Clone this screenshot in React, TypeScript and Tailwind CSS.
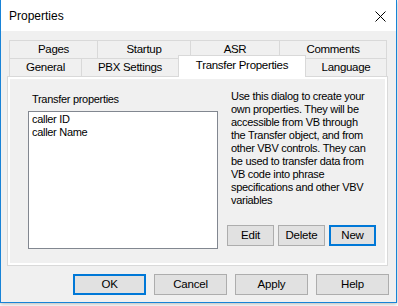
import { ReactNode } from 'react';

const font = { fontFamily: '"Liberation Sans", Arial, sans-serif' };

const topTabs = [
    { label: 'Pages', w: 'w-[88px]' },
    { label: 'Startup', w: 'w-[93px]' },
    { label: 'ASR', w: 'w-[89px]' },
    { label: 'Comments', w: 'w-[108px] border-r' },
];

const descLines = [
    'Use this dialog to create your',
    'own properties. They will be',
    'accessible from VB through',
    'the Transfer object, and from',
    'other VBV controls. They can',
    'be used to transfer data from',
    'VB code into phrase',
    'specifications and other VBV',
    'variables',
];

function Btn({ children, w, primary }: { children: ReactNode; w: string; primary?: boolean }) {
    return (
        <button
            className={`${w} h-[21px] flex items-center justify-center bg-[#e1e1e1] text-[11.5px] tracking-[-0.2px] text-black ${primary ? 'border-2 border-[#0078d7]' : 'border border-[#adadad]'
                }`}
        >
            {children}
        </button>
    );
}

export default function App() {
    return (
        <div className="w-[398px] h-[306px] bg-white" style={font}>
            <div className="w-[397px] h-[303px] flex flex-col bg-[#f0f0f0] border-x border-b border-[#1883d7] shadow-[0_1px_4px_rgba(0,0,0,0.3)]">
                {/* title bar */}
                <div className="h-[31px] bg-white flex items-center pl-[8px] pr-[10px] justify-between">
                    <span className="text-[12px] text-black">Properties</span>
                    <svg width="11" height="11" viewBox="0 0 11 11" className="mt-[1px]">
                        <path d="M0.5 0.5 L10.5 10.5 M10.5 0.5 L0.5 10.5" stroke="#000" strokeWidth="1" />
                    </svg>
                </div>

                <div className="pl-[6px] pt-[9px] flex flex-col">
                    {/* tab rows */}
                    <div className="ml-[2px] flex h-[18px]">
                        {topTabs.map((t) => (
                            <div
                                key={t.label}
                                className={`${t.w} h-full border-l border-t border-[#d9d9d9] flex items-center justify-center text-[11.5px] tracking-[-0.3px] text-black`}
                            >
                                {t.label}
                            </div>
                        ))}
                    </div>
                    <div className="ml-[2px] flex items-end h-[18px]">
                        <div className="w-[72px] h-full border-l border-t border-[#d9d9d9] flex items-center justify-center text-[11.5px] tracking-[-0.3px] text-black">
                            General
                        </div>
                        <div className="w-[97px] h-full border-l border-t border-[#d9d9d9] flex items-center justify-center text-[11.5px] tracking-[-0.3px] text-black">
                            PBX Settings
                        </div>
                        <div className="relative z-10 w-[128px] h-[22px] -mb-[1px] bg-white border-x border-t border-[#d9d9d9] flex items-center justify-center pb-[1px] text-[11.5px] tracking-[-0.3px] text-black">
                            Transfer Properties
                        </div>
                        <div className="w-[81px] h-full border-r border-t border-[#d9d9d9] flex items-center justify-center text-[11.5px] tracking-[-0.3px] text-black">
                            Language
                        </div>
                    </div>

                    {/* tab panel */}
                    <div className="w-[381px] h-[190px] border border-[#d9d9d9] shadow-[inset_0_0_0_2px_#ffffff] flex pl-[20px] text-[11px] tracking-[-0.3px] leading-[13px] text-black">
                        <div className="w-[190px] pt-[16px] flex flex-col">
                            <div className="pl-[4px] h-[13px] mb-[5px]">Transfer properties</div>
                            <div className="h-[138px] bg-white border border-[#828790] pl-[3px] pt-[1px]">
                                <div>caller ID</div>
                                <div>caller Name</div>
                            </div>
                        </div>
                        <div className="ml-[9px] pt-[13px] flex flex-col">
                            <div className="pl-[4px]">
                                {descLines.map((l) => (
                                    <div key={l} className="whitespace-nowrap">{l}</div>
                                ))}
                            </div>
                            <div className="mt-[18px] flex gap-[4px]">
                                <Btn w="w-[47px]">Edit</Btn>
                                <Btn w="w-[47px]">Delete</Btn>
                                <Btn w="w-[47px]" primary>New</Btn>
                            </div>
                        </div>
                    </div>
                </div>

                {/* dialog buttons */}
                <div className="mt-[8px] flex justify-end gap-[8px] pr-[7px]">
                    <Btn w="w-[73px]" primary>OK</Btn>
                    <Btn w="w-[73px]">Cancel</Btn>
                    <Btn w="w-[73px]">Apply</Btn>
                    <Btn w="w-[73px]">Help</Btn>
                </div>
            </div>
        </div>
    );
}
